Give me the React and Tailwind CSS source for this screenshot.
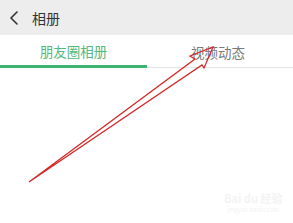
export default function App() {
  return (
    <div className="relative w-[293px] h-[223px] bg-white overflow-hidden" style={{ fontFamily: '"Noto Sans CJK SC", "Noto Sans", sans-serif' }}>
      {/* Header */}
      <div className="flex items-center h-[35px] bg-[#ededed] pl-[9px]">
        <svg width="10" height="14" viewBox="0 0 10 14" fill="none">
          <path d="M8 1 L2 7 L8 13" stroke="#333" strokeWidth="1.6" strokeLinecap="round" strokeLinejoin="round" />
        </svg>
        <span className="ml-[13px] text-[14px] leading-none text-[#333]">相册</span>
      </div>

      {/* Tabs */}
      <div className="flex h-[33px] border-b border-[#e4e4e4]">
        <div className="w-[147px] flex items-center justify-center border-b-[3px] border-[#3cb371] -mb-px pt-[2px]">
          <span className="text-[13.5px] text-[#52b97e]">朋友圈相册</span>
        </div>
        <div className="flex-1 flex items-center justify-center pt-[2px]">
          <span className="text-[13.5px] text-[#7a7a7a] pr-[4px]">视频动态</span>
        </div>
      </div>

      {/* Annotation arrow */}
      <svg className="absolute inset-0" width="293" height="223" viewBox="0 0 293 223">
        <path
          d="M29 182 L195 59 L190 56 L213 47 L204 68 L202 65 Z"
          fill="none"
          stroke="#d42a2a"
          strokeWidth="1.3"
          strokeLinejoin="miter"
        />
      </svg>

      {/* Watermark */}
      <div className="absolute left-[224px] top-[193px] flex flex-col items-center text-[#f3f3f3] leading-none">
        <span className="text-[11px] font-bold">Bai du 经验</span>
        <span className="text-[6px] mt-[3px]">jingyan.baidu.com</span>
      </div>
    </div>
  )
}
